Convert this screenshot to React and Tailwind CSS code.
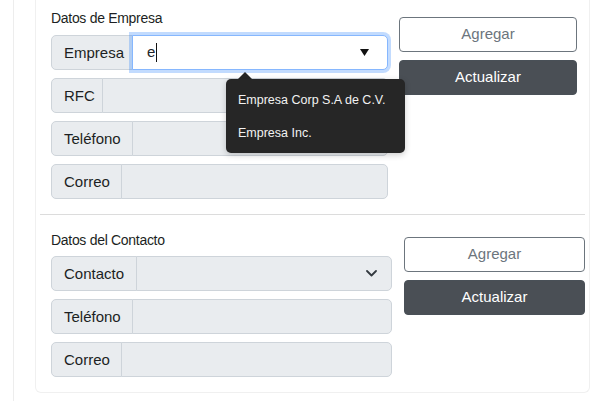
const font = { fontFamily: '"Liberation Sans", Arial, sans-serif' };

function Row({ label, labelW, children, focused }) {
  return (
    <div className="flex h-[35px]">
      <div
        className="flex items-center shrink-0 rounded-l-[5px] border border-[#ced4da] bg-[#e9ecef] pl-[12px] pt-px text-[15px] text-[#1c1f23]"
        style={{ width: labelW }}
      >
        {label}
      </div>
      {focused ? (
        <div className="relative z-10 -ml-px flex flex-1 items-center rounded-r-[5px] border border-[#86b7fe] bg-white pl-[14px] pr-[18px] shadow-[0_0_0_3px_rgba(13,110,253,0.25)]">
          {children}
        </div>
      ) : (
        <div className="-ml-px flex flex-1 items-center justify-end rounded-r-[5px] border border-[#ced4da] bg-[#e9ecef] pr-[14px]">
          {children}
        </div>
      )}
    </div>
  );
}

function Buttons() {
  return (
    <div className="flex flex-col gap-[8px]">
      <button className="h-[35px] rounded-[4px] border border-[#6c757d] bg-white text-[15px] text-[#6c757d]">
        Agregar
      </button>
      <button className="h-[35px] rounded-[4px] border border-[#495057] bg-[#4a4f55] text-[15px] text-white">
        Actualizar
      </button>
    </div>
  );
}

export default function App() {
  return (
    <div className="flex h-[401px] w-[600px] overflow-hidden bg-white" style={font}>
      <div className="ml-[13px] border-l border-[#ededed] pl-[21px]">
        <div className="w-[555px] rounded-b-[6px] border-x border-b border-[#f0f0f0] pl-[15px] pr-[3px] pb-[15px]">
          {/* Datos de Empresa */}
          <div className="relative flex pr-[8px]">
            <div className="w-[337px] pt-[8px]">
              <h2 className="h-[20px] text-[14px] leading-[20px] tracking-[-0.3px] text-[#1c1f23]">
                Datos de Empresa
              </h2>
              <div className="mt-[7px] flex flex-col gap-[8px]">
                <Row label="Empresa" labelW={82} focused>
                  <span className="text-[15px] text-[#212529]">e</span>
                  <span className="ml-px h-[19px] w-px bg-[#111]" />
                  <svg className="ml-auto" width="9" height="7" viewBox="0 0 9 7">
                    <polygon points="0,0 9,0 4.5,7" fill="#111" />
                  </svg>
                </Row>
                <Row label="RFC" labelW={52} />
                <Row label="Teléfono" labelW={82} />
                <Row label="Correo" labelW={71} />
              </div>
            </div>
            <div className="ml-[11px] w-[178px] pt-[17px]">
              <Buttons />
            </div>

            {/* autocomplete list */}
            <div className="absolute left-[187px] top-[72px] z-20 h-0 w-0 border-x-[7px] border-b-[7px] border-x-transparent border-b-[#262626]" />
            <div className="absolute left-[175px] top-[79px] z-20 flex h-[74px] w-[179px] flex-col justify-center gap-[13px] rounded-[5px] bg-[#262626] pl-[12px] text-[12.5px] text-[#f2f2f2] shadow-[0_2px_6px_rgba(0,0,0,0.2)]">
              <div className="leading-[20px]">Empresa Corp S.A de C.V.</div>
              <div className="leading-[20px]">Empresa Inc.</div>
            </div>
          </div>

          <div className="-ml-[11px] mt-[15px] h-px w-[545px] bg-[#dcdcdc]" />

          {/* Datos del Contacto */}
          <div className="flex">
            <div className="w-[341px] pt-[15px]">
              <h2 className="h-[20px] text-[14px] leading-[20px] tracking-[-0.3px] text-[#1c1f23]">
                Datos del Contacto
              </h2>
              <div className="mt-[6px] flex flex-col gap-[8px]">
                <Row label="Contacto" labelW={86}>
                  <svg width="11" height="7" viewBox="0 0 11 7" fill="none">
                    <path d="M1 1l4.5 4.5L10 1" stroke="#343a40" strokeWidth="1.8" strokeLinecap="round" strokeLinejoin="round" />
                  </svg>
                </Row>
                <Row label="Teléfono" labelW={82} />
                <Row label="Correo" labelW={71} />
              </div>
            </div>
            <div className="ml-[12px] w-[181px] pt-[22px]">
              <Buttons />
            </div>
          </div>
        </div>
      </div>
    </div>
  );
}
